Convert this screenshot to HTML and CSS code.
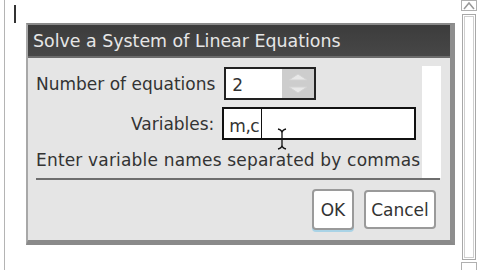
FILE: index.html
```html
<!DOCTYPE html>
<html lang="en">
<head>
  <meta charset="UTF-8" />
  <title>Solve a System of Linear Equations</title>
  <link rel="stylesheet" href="styles.css">
</head>
<body>
<div class="screen">
  <div class="doc">
    <div class="caret"></div>
    <div class="dialog">
      <div class="title">Solve a System of Linear Equations</div>
      <div class="body">
        <div class="pane">
          <div class="form">
            <div class="fields">
              <label class="lbl">Number of equations</label>
              <div class="spin">
                <span class="val">2</span>
                <span class="arrows">
                  <svg width="30" height="29" viewBox="0 0 30 29">
                    <path d="M6 11 L15 5 L24 11 Z" fill="#e8e8e8" stroke="#d2d2d2"/>
                    <path d="M6 18 L15 24 L24 18 Z" fill="#e8e8e8" stroke="#d2d2d2"/>
                  </svg>
                </span>
              </div>
              <label class="lbl">Variables:</label>
              <div class="text-in"><span class="typed">m,c</span><span class="tcaret"></span></div>
            </div>
            <p class="hint">Enter variable names separated by commas</p>
          </div>
          <div class="strip"></div>
        </div>
        <div class="sep"></div>
        <div class="btns">
          <button class="btn ok">OK</button>
          <button class="btn cancel">Cancel</button>
        </div>
      </div>
      <svg class="ibeam" width="10" height="22" viewBox="0 0 10 22">
        <path d="M1 1 Q5 2 5 5 L5 17 Q5 20 1 21 M9 1 Q5 2 5 5 M5 17 Q5 20 9 21 M3 11 L7 11" fill="none" stroke="#111" stroke-width="1.3"/>
      </svg>
    </div>
  </div>
  <div class="vscroll">
    <div class="sbtn up">
      <svg width="14" height="9" viewBox="0 0 14 9"><path d="M2 8 L7 2 L12 8" fill="none" stroke="#999" stroke-width="1.5"/></svg>
    </div>
    <div class="track"><div class="thumb"></div></div>
    <div class="sbtn down"></div>
  </div>
</div>
</body>
</html>
```

FILE: styles.css
```css
* { box-sizing: border-box; margin: 0; padding: 0; }
html, body { width: 480px; height: 270px; background: #fff; overflow: hidden; }
body { font-family: "DejaVu Sans", sans-serif; color: #333; }

.screen { display: flex; width: 480px; height: 270px; }
.doc {
  flex: 1; margin-left: 4px;
  border-left: 1px solid #b4b4b4;
  display: flex; flex-direction: column; align-items: flex-start;
}
.caret { width: 2px; height: 18px; margin: 5px 0 0 9px; background: #333; }

.dialog {
  position: relative;
  width: 429px; height: 222px; margin-left: 21px;
  border-top: 2px solid #8a8a8a;
  border-left: 2px solid #a8a8a8;
  border-right: 5px solid #8e8e8e;
  border-bottom: 5px solid #8a8a8a;
  background: #e5e5e5;
  display: flex; flex-direction: column;
}
.title {
  height: 33px; padding: 5px 0 0 5px;
  background: linear-gradient(#3c3c3c, #474747);
  border-bottom: 2px solid #6c6c6c;
  color: #e6e6e6; font-size: 17.4px; line-height: 22px;
}
.body { flex: 1; padding: 8px 9px 0 0; display: flex; flex-direction: column; }
.pane { display: flex; height: 112px; }
.form { flex: 1; padding: 1px 0 0 8px; }
.strip { width: 19px; background: #fff; }

.fields {
  display: grid; grid-template-columns: auto auto;
  column-gap: 9px; row-gap: 7px; align-items: center; justify-items: start;
  justify-content: start;
}
.lbl { justify-self: end; font-size: 17px; line-height: 20px; white-space: nowrap; }
.fields .lbl:nth-of-type(2) { margin-right: 1px; }

.spin {
  width: 92px; height: 33px; display: flex; align-items: center;
  border: 2px solid #222; background: #fff;
}
.spin .val { flex: 1; padding-left: 6px; font-size: 17px; padding-top: 3px; }
.arrows { width: 32px; height: 29px; background: #cdcdcd; display: flex; align-items: center; justify-content: center; }

.text-in {
  width: 194px; height: 33px; margin-left: -2px;
  border: 2px solid #111; background: #fff;
  display: flex; align-items: stretch;
}
.typed { padding: 7px 0 0 5px; font-size: 17px; letter-spacing: -0.5px; }
.tcaret { width: 1px; background: #111; margin-left: 2px; }

.hint { font-size: 17px; line-height: 22px; margin-top: 9px; letter-spacing: 0.18px; white-space: nowrap; }

.sep { height: 2px; margin: 0 1px 0 8px; background: #6e6e6e; }

.btns { display: flex; justify-content: flex-end; align-items: flex-start; gap: 10px; padding: 9px 5px 0 0; }
.btn {
  font-family: "DejaVu Sans", sans-serif; font-size: 17px; color: #333;
  background: #fff; border: 2px solid #9a9a9a; border-radius: 4px;
  height: 40px; padding: 0;
}
.btn.ok { width: 42px; height: 41px; box-shadow: 0 2px 0 #a9d3e6; }
.btn.cancel { width: 72px; margin-top: 1px; height: 39px; }

.ibeam { position: absolute; left: 249px; top: 103px; }

.vscroll { width: 18px; display: flex; flex-direction: column; align-items: center; margin-right: 2px; }
.sbtn { width: 16px; border: 1px solid #b0b0b0; background: #fff; }
.sbtn.up { height: 11px; display: flex; justify-content: center; }
.sbtn.down { height: 8px; border-bottom: none; }
.track { flex: 1; width: 14px; margin: 3px 0 2px; border: 1px solid #a8a8a8; padding: 1px; }
.thumb { height: 100%; border: 1px solid #cfcfcf; }
```
